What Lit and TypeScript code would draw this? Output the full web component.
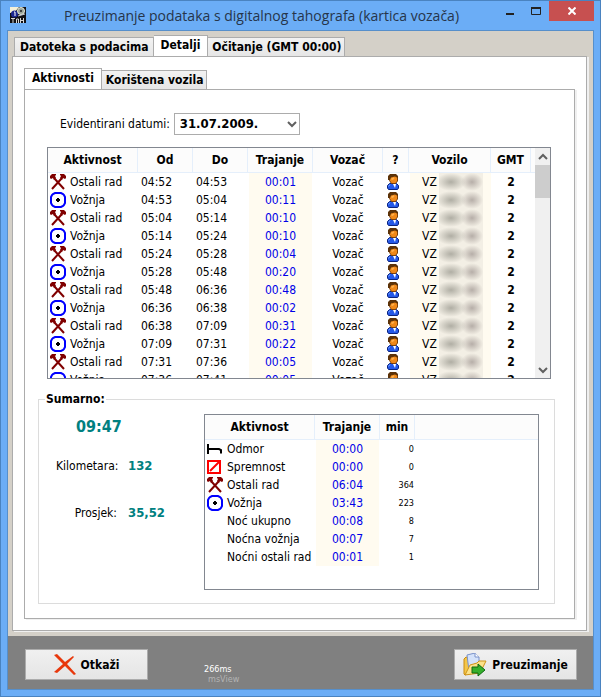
import { LitElement, html, css, svg } from "lit";
import { customElement, property } from "lit/decorators.js";
import { classMap } from "lit/directives/class-map.js";

type IconName = "hammers" | "drive" | "bed" | "ready" | "driver" | "app" | "cancel" | "folder" | "up" | "down";

const shapes = {
  hammers: svg`<path d="M4 4L14 15M12 4L2 15" stroke="#800000" fill="none" stroke-width="2"/>
    <path fill="#800000" d="M0 4V2L2 0H6V1L5 2L6 4L4 6L3 4L1 5ZM16 4V2L14 0H10V1L11 2L10 4L12 6L13 4L15 5Z"/>`,
  drive: svg`<path d="M5 1H11L13 2L14 3L15 5V11L14 13L13 14L11 15H5L3 14L2 13L1 11V5L2 3L3 2Z" fill="#fff" stroke="#00f" stroke-width="2"/>
    <rect x="6" y="7" width="4" height="2"/><rect x="7" y="6" width="2" height="4"/>`,
  bed: svg`<path d="M1 3V13M1 8H12L14 9V12.5" fill="none" stroke="#000" stroke-width="2"/>`,
  ready: svg`<rect x="1" y="2" width="12" height="12" fill="#fff" stroke="#f00" stroke-width="2"/><path d="M3 12L12 3" stroke="#f00" stroke-width="2"/>`,
  driver: svg`<path d="M2.500 14V11.500L4.500 9.500H11.500L13.500 11.500V14L12.500 15.500H3.500Z" fill="#2458e8" stroke="#0c2480"/>
    <path d="M3.500 12.500L5 10.500" stroke="#78a4ff"/><path d="M8 10H11L10 14Z" fill="#fff"/>
    <path d="M4.500 4V6.500L6.500 9.500H10.500L12.500 7V3L10 1H6Z" fill="#f08818" stroke="#7c4008"/>
    <path d="M6.500 5.500L9 4" stroke="#ffb04c" stroke-width="2"/>
    <path d="M3 6V2L5 0H11L13 2V4L10 2.500L6 3.500L5 6Z" fill="#5c3208"/>`,
  app: svg`<rect width="16" height="16" fill="#101014"/><path d="M0 0H9L5 5L0 6Z" fill="#f4f0d8"/>
    <circle cx="4.500" cy="7" r="3.500" fill="#1c2890"/><path d="M4 5H5V9" stroke="#fff" fill="none"/>
    <circle cx="11" cy="4" r="3.500" fill="#9aa39a" stroke="#e8ecd8"/><circle cx="11" cy="4" r="1" fill="#222"/>
    <path d="M8 9L15 7" stroke="#c8ccd8"/><path d="M1 11.500H5M3 11V16M6.500 16V12H8.500V16M10.500 11V16M10 13.500H13M13.500 11V16" stroke="#d8d8d8" fill="none"/>`,
  cancel: svg`<path d="M0 1L3 0L11 8L19 2L20 3L13 10L22 20L20 21L11 12L3 19L0 18L9 10Z" fill="#e8380c"/>`,
  folder: svg`<path d="M1 6L3 4L6 5V20L2 22L1 21Z" fill="#f4c648" stroke="#c88a10"/>
    <path d="M4 2L12 0L16 4V16L6 18Z" fill="#d4e2fa" stroke="#7890c8"/><path d="M12 0V4H16" fill="#fff" stroke="#7890c8"/>
    <path d="M2 22L7 12L14 10L16 8H23L17 20Z" fill="#fbe28a" stroke="#cf9418"/>
    <path d="M9 14H15V11L22 17L15 23V20H9Z" fill="#36b02c" stroke="#0e6810"/>`,
  up: svg`<path d="M1 6L5 2L9 6" fill="none" stroke="#606060" stroke-width="2"/>`,
  down: svg`<path d="M1 2L5 6L9 2" fill="none" stroke="#606060" stroke-width="2"/>`,
};

const boxes: Partial<Record<IconName, string>> = { cancel: "0 0 22 22", folder: "0 0 24 24", up: "0 0 10 8", down: "0 0 10 8" };

@customElement("ui-icon")
export class UiIcon extends LitElement {
  @property() name: IconName = "drive";
  static styles = css`
    :host { display: block; flex: none; width: 16px; height: 16px; }
    svg { display: block; width: 100%; height: 100%; }
  `;
  render() {
    return html`<svg viewBox=${boxes[this.name] ?? "0 0 16 16"} aria-hidden="true">${shapes[this.name]}</svg>`;
  }
}

const times = ["04:52", "04:53", "05:04", "05:14", "05:24", "05:28", "05:48", "06:36", "06:38", "07:09", "07:31", "07:36", "07:41"];
const durations = ["00:01", "00:11", "00:10", "00:10", "00:04", "00:20", "00:48", "00:02", "00:31", "00:22", "00:05", "00:05"];
const records = durations.map((duration, i) => ({
  work: i % 2 === 0,
  from: times[i],
  to: times[i + 1],
  duration,
}));

const summary: { icon?: IconName; label: string; time: string; min: number }[] = [
  { icon: "bed", label: "Odmor", time: "00:00", min: 0 },
  { icon: "ready", label: "Spremnost", time: "00:00", min: 0 },
  { icon: "hammers", label: "Ostali rad", time: "06:04", min: 364 },
  { icon: "drive", label: "Vožnja", time: "03:43", min: 223 },
  { label: "Noć ukupno", time: "00:08", min: 8 },
  { label: "Noćna vožnja", time: "00:07", min: 7 },
  { label: "Noćni ostali rad", time: "00:01", min: 1 },
];

@customElement("app-root")
export class AppRoot extends LitElement {
  static styles = css`
    * { box-sizing: border-box; }
    :host {
      display: flex; flex-direction: column; box-sizing: border-box; min-height: 100vh;
      border: 1px solid #4a83c0; background: #6badf6; padding: 0 6px 6px; color: #000;
      font: 12px/18px "DejaVu Sans Condensed", "DejaVu Sans", sans-serif;
    }
    button { font: inherit; color: inherit; margin: 0; }
    .titlebar { display: flex; height: 29px; }
    .titlebar ui-icon { margin: 6px 0 0 3px; }
    h1 {
      flex: 1; margin: 0; text-align: center; color: #26354a; white-space: nowrap;
      font: 14px/30px "Open Sans", "Noto Sans", sans-serif;
    }
    .winbtn { width: 26px; height: 20px; padding: 0; border: 0; background: none; display: flex; align-items: center; justify-content: center; }
    .winbtn.close { width: 45px; background: #c75050; }
    .winbtn svg { display: block; }
    .client { flex: 1; display: flex; flex-direction: column; border: 1px solid #568fcb; background: #d4d0c8; }
    .workspace { flex: 1; display: flex; flex-direction: column; padding: 4px 6px 5px 4px; }
    .tabs { display: flex; align-items: flex-end; margin-bottom: -1px; padding-left: 2px; }
    .tab {
      height: 20px; padding: 0 4px 0 5px; border: 1px solid #acacac; border-left-width: 0; white-space: nowrap;
      background: linear-gradient(#f2f2f2, #e6e6e6); font-weight: bold; line-height: 18px;
    }
    .tab:first-child { border-left-width: 1px; }
    .tab.active { height: 22px; padding: 0 7px 2px; background: #fff; border-bottom-color: #fff; }
    .tabs .tab:last-child { padding: 0 3px 0 4px; }
    .page {
      flex: 1; display: flex; flex-direction: column; border: 1px solid #acacac; background: #fff;
      box-shadow: 2px 1px 0 #f0f0f0;
    }
    .outer { padding: 11px; }
    .inner-tabs { padding-left: 0; }
    .inner { padding: 23px 19px 14px 13px; }
    .picker { display: flex; align-items: center; gap: 4px; padding-left: 22px; margin-bottom: 12px; }
    .combo { position: relative; width: 126px; }
    select {
      appearance: none; display: block; width: 100%; height: 22px; padding: 0 5px; margin: 0;
      border: 1px solid #acacac; border-radius: 0; background: #fff; color: #000;
      font: bold 13px/20px "DejaVu Sans Condensed", "DejaVu Sans", sans-serif;
    }
    .combo ui-icon { position: absolute; right: 3px; top: 7px; width: 10px; height: 8px; pointer-events: none; }
    .grid { display: flex; align-items: flex-start; border: 1px solid #828790; background: #fff; overflow: hidden; }
    .log { height: 232px; margin: 0 4px 0 9px; }
    .view { flex: 1; height: 100%; overflow: hidden; }
    table { border-collapse: separate; border-spacing: 0; table-layout: fixed; width: 100%; }
    th {
      height: 25px; padding: 0; background: #fcfcfc; font-weight: bold; white-space: nowrap;
      border-right: 1px solid #e5effb; border-bottom: 1px solid #e5effb;
    }
    th.rest { border-right: 0; }
    td { height: 18px; padding: 0; line-height: 18px; white-space: nowrap; text-align: center; }
    td.time { text-align: left; padding-left: 3px; }
    td.span { background: #fffbf0; color: #0000e8; border-right: 1px solid #fff; border-left: 1px solid #fff; }
    td.plate { background: #fffbf0; border-left: 1px solid #fff; }
    td.gmt { font-weight: bold; }
    td.min { font-size: 9px; text-align: right; padding: 0 1px 0 0; line-height: 16px; }
    .act { display: flex; align-items: center; gap: 4px; padding-left: 2px; text-align: left; }
    .act.plain { padding-left: 22px; }
    .who { margin-left: 2px; }
    .reg { display: flex; gap: 2px; padding-left: 12px; }
    .mask {
      width: 44px; height: 18px;
      background:
        radial-gradient(ellipse 15px 9px at 12px 9px, #b0aea4, transparent),
        radial-gradient(ellipse 11px 9px at 33px 9px, #b6aea8, transparent), #f3efe5;
    }
    .c-act { width: 90px; } .c-time { width: 55px; } .c-span { width: 65px; } .c-role { width: 70px; }
    .c-who { width: 26px; } .c-plate { width: 82px; } .c-gmt { width: 40px; } .c-sum { width: 110px; } .c-min { width: 35px; }
    .scroll { width: 15px; height: 100%; background: #f0f0f0; display: flex; flex-direction: column; align-items: center; justify-content: space-between; }
    .scroll button { height: 17px; padding: 0; border: 0; background: none; }
    .scroll ui-icon { width: 10px; height: 8px; }
    .thumb { width: 15px; height: 33px; background: #cdcdcd; }
    .track { flex: 1; }
    fieldset {
      display: flex; align-items: flex-start; flex: 1; min-width: 0; margin: 11px 0 0; padding: 6px 15px 13px 17px; border: 1px solid #dcdcdc;
    }
    legend { margin-left: -11px; padding: 0 1px; font-weight: bold; line-height: 18px; }
    .left { flex: none; }
    .totals { width: 148px; margin: 0; display: grid; grid-template-columns: 61px 1fr; column-gap: 11px; row-gap: 29px; }
    .totals dt { text-align: right; white-space: nowrap; }
    .totals dd { margin: 0; font-weight: bold; font-size: 13px; color: #008080; }
    .total { margin: 4px 0 21px 20px; font-weight: bold; font-size: 16px; line-height: 18px; color: #008080; }
    .sum { flex: 1; height: 176px; }
    .footer { display: flex; align-items: center; justify-content: space-between; height: 53px; padding: 4px 16px 0 17px; background: #808080; }
    .cmd {
      display: flex; align-items: center; justify-content: center; gap: 5px; width: 123px; height: 31px; padding: 0; white-space: nowrap;
      border: 1px solid #acacac; background: linear-gradient(#f0f0f0, #e5e5e5); font-weight: bold;
    }
    .cmd ui-icon { width: 22px; height: 22px; }
    .cmd .big { width: 24px; height: 24px; }
    .status { flex: 1; padding: 19px 0 0 56px; font-size: 9px; line-height: 10px; color: #fff; }
    .status span { display: block; }
    .status .dim { padding-left: 4px; color: #b4b4b4; }
  `;

  private tab(label: string, active = false) {
    return html`<button role="tab" aria-selected=${active} class=${classMap({ tab: true, active })}>${label}</button>`;
  }

  private activity(label: string, icon?: IconName) {
    return html`<div class=${classMap({ act: true, plain: !icon })}>
      ${icon ? html`<ui-icon name=${icon}></ui-icon>` : null}<span>${label}</span>
    </div>`;
  }

  render() {
    return html`
      <header class="titlebar">
        <ui-icon name="app"></ui-icon>
        <h1>Preuzimanje podataka s digitalnog tahografa (kartica vozača)</h1>
        <button class="winbtn" aria-label="Minimiziraj"><svg width="8" height="8"><rect y="6" width="8" height="2" fill="#222" /></svg></button>
        <button class="winbtn" aria-label="Maksimiziraj"><svg width="10" height="8"><path d="M0 1H10M.5 1V7.500H9.500V1" fill="none" stroke="#222" /><rect width="10" height="2" fill="#222" /></svg></button>
        <button class="winbtn close" aria-label="Zatvori"><svg width="8" height="8"><path d="M.5 .5L7.500 7.500M7.500 .5L.5 7.500" stroke="#fff" stroke-width="2" /></svg></button>
      </header>
      <main class="client">
        <div class="workspace">
          <div class="tabs" role="tablist">
            ${this.tab("Datoteka s podacima")}${this.tab("Detalji", true)}${this.tab("Očitanje (GMT 00:00)")}
          </div>
          <section class="page outer">
            <div class="tabs inner-tabs" role="tablist">${this.tab("Aktivnosti", true)}${this.tab("Korištena vozila")}</div>
            <section class="page inner">
              <div class="picker">
                <label for="day">Evidentirani datumi:</label>
                <div class="combo">
                  <select id="day"><option>31.07.2009.</option></select>
                  <ui-icon name="down"></ui-icon>
                </div>
              </div>
              <div class="grid log">
                <div class="view">
                  <table>
                    <colgroup>
                      <col class="c-act" /><col class="c-time" /><col class="c-time" /><col class="c-span" /><col class="c-role" />
                      <col class="c-who" /><col class="c-plate" /><col class="c-gmt" /><col />
                    </colgroup>
                    <thead>
                      <tr>
                        <th>Aktivnost</th><th>Od</th><th>Do</th><th>Trajanje</th><th>Vozač</th><th>?</th><th>Vozilo</th><th>GMT</th><th class="rest"></th>
                      </tr>
                    </thead>
                    <tbody>
                      ${records.map(
                        (r) => html`<tr>
                          <td>${this.activity(r.work ? "Ostali rad" : "Vožnja", r.work ? "hammers" : "drive")}</td>
                          <td class="time">${r.from}</td>
                          <td class="time">${r.to}</td>
                          <td class="span">${r.duration}</td>
                          <td>Vozač</td>
                          <td><ui-icon class="who" name="driver"></ui-icon></td>
                          <td class="plate"><div class="reg">VZ<span class="mask"></span></div></td>
                          <td class="gmt">2</td>
                          <td></td>
                        </tr>`
                      )}
                    </tbody>
                  </table>
                </div>
                <div class="scroll">
                  <button aria-label="Gore"><ui-icon name="up"></ui-icon></button>
                  <div class="thumb"></div>
                  <div class="track"></div>
                  <button aria-label="Dolje"><ui-icon name="down"></ui-icon></button>
                </div>
              </div>
              <fieldset>
                <legend>Sumarno:</legend>
                <div class="left">
                  <div class="total">09:47</div>
                  <dl class="totals">
                    <dt>Kilometara:</dt><dd>132</dd>
                    <dt>Prosjek:</dt><dd>35,52</dd>
                  </dl>
                </div>
                <div class="grid sum">
                  <table>
                    <colgroup><col class="c-sum" /><col class="c-span" /><col class="c-min" /><col /></colgroup>
                    <thead>
                      <tr><th>Aktivnost</th><th>Trajanje</th><th>min</th><th class="rest"></th></tr>
                    </thead>
                    <tbody>
                      ${summary.map(
                        (s) => html`<tr>
                          <td>${this.activity(s.label, s.icon)}</td>
                          <td class="span">${s.time}</td>
                          <td class="min">${s.min}</td>
                          <td></td>
                        </tr>`
                      )}
                    </tbody>
                  </table>
                </div>
              </fieldset>
            </section>
          </section>
        </div>
        <footer class="footer">
          <button class="cmd"><ui-icon name="cancel"></ui-icon>Otkaži</button>
          <div class="status"><span>266ms</span><span class="dim">msView</span></div>
          <button class="cmd"><ui-icon class="big" name="folder"></ui-icon>Preuzimanje</button>
        </footer>
      </main>
    `;
  }
}
